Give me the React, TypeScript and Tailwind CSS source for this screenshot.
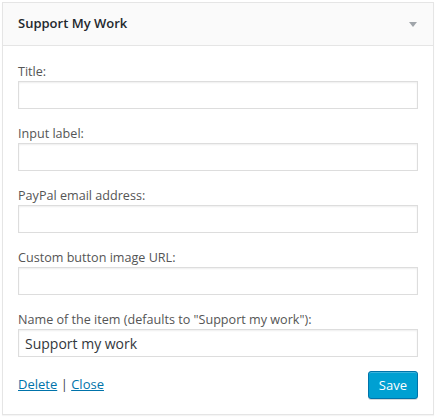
const fields = [
  { label: "Title:", value: "" },
  { label: "Input label:", value: "" },
  { label: "PayPal email address:", value: "" },
  { label: "Custom button image URL:", value: "" },
  { label: 'Name of the item (defaults to "Support my work"):', value: "Support my work" },
];

export default function App() {
  return (
    <div className="p-[2px] bg-white font-['Open_Sans',sans-serif]">
      <div className="border border-[#e5e5e5] bg-white shadow-[0_1px_1px_rgba(0,0,0,0.04)]">
        <div className="flex h-[43px] items-center justify-between border-b border-[#e5e5e5] bg-[#fafafa] pl-[15px] pr-[16px]">
          <h3 className="text-[13px] font-semibold text-[#23282d]">Support My Work</h3>
          <span className="h-0 w-0 border-l-[4px] border-r-[4px] border-t-[5px] border-l-transparent border-r-transparent border-t-[#a0a5aa]" />
        </div>

        <div className="px-[15px] pt-[16px] pb-[15px]">
          <div className="flex flex-col gap-[15px]">
            {fields.map((f) => (
              <div key={f.label}>
                <label className="block text-[12.6px] leading-[19px] text-[#555]">{f.label}</label>
                <input
                  type="text"
                  defaultValue={f.value}
                  className="block h-[28px] w-full border border-[#ddd] bg-white px-[6px] text-[14px] text-[#32373c] shadow-[inset_0_1px_2px_rgba(0,0,0,0.07)] outline-none"
                />
              </div>
            ))}
          </div>

          <div className="mt-[14px] flex items-center justify-between">
            <div className="text-[13px] text-[#444]">
              <a href="#" className="text-[#0073aa] underline">Delete</a>
              {" | "}
              <a href="#" className="text-[#0073aa] underline">Close</a>
            </div>
            <button className="h-[28px] rounded-[3px] border border-[#0073aa] bg-[#00a0d2] px-[10px] pb-[1px] text-[13px] leading-[26px] text-white shadow-[inset_0_1px_0_rgba(120,200,230,0.5),0_1px_0_rgba(0,0,0,0.15)]">
              Save
            </button>
          </div>
        </div>
      </div>
    </div>
  );
}
